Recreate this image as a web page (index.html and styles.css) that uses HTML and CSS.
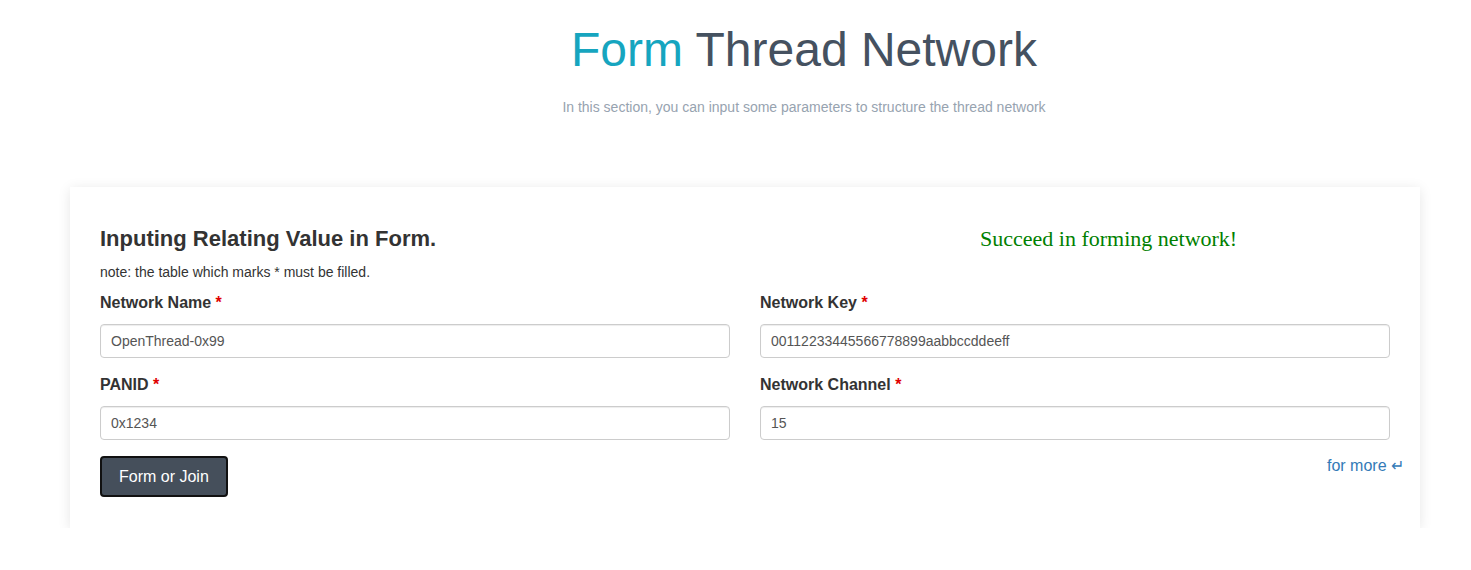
FILE: index.html
```html
<!DOCTYPE html>
<html>
<head>
<meta charset="utf-8">
<link rel="stylesheet" href="styles.css">
</head>
<body>
<header class="hero">
  <h1 class="title"><span class="accent">Form</span> Thread Network</h1>
  <p class="subtitle">In this section, you can input some parameters to structure the thread network</p>
</header>
<section class="card">
  <div class="card-head">
    <div class="head-left">
      <h2 class="form-title">Inputing Relating Value in Form.</h2>
      <p class="note">note: the table which marks * must be filled.</p>
    </div>
    <div class="head-right">
      <p class="success">Succeed in forming network!</p>
    </div>
  </div>
  <div class="grid">
    <div class="field">
      <label class="label">Network Name <span class="req">*</span></label>
      <input class="input" type="text" value="OpenThread-0x99">
    </div>
    <div class="field">
      <label class="label">Network Key <span class="req">*</span></label>
      <input class="input" type="text" value="00112233445566778899aabbccddeeff">
    </div>
    <div class="field">
      <label class="label">PANID <span class="req">*</span></label>
      <input class="input" type="text" value="0x1234">
    </div>
    <div class="field">
      <label class="label">Network Channel <span class="req">*</span></label>
      <input class="input" type="text" value="15">
    </div>
  </div>
  <div class="actions">
    <button class="btn" type="button">Form or Join</button>
    <a class="more" href="#">for more ↵</a>
  </div>
</section>
</body>
</html>
```
FILE: styles.css
```css
html, body {
  margin: 0;
  padding: 0;
  background: #ffffff;
  font-family: "Liberation Sans", Arial, sans-serif;
  color: #333333;
}
.hero {
  padding-left: 137px;
  text-align: center;
  padding-top: 22px;
}
.title {
  margin: 0;
  font-size: 48px;
  font-weight: 400;
  line-height: 56px;
  color: #455160;
}
.accent {
  color: #16a5bf;
}
.subtitle {
  margin: 19px 0 0 0;
  font-size: 14px;
  line-height: 20px;
  color: #97a3b0;
}
.card {
  margin: 70px 51px 0 70px;
  background: #fff;
  box-shadow: 0 2px 12px rgba(0,0,0,0.1);
  padding: 39px 30px 31px 30px;
}
.card-head {
  display: grid;
  grid-template-columns: 1fr 1fr;
  column-gap: 30px;
}
.head-right {
  padding-left: 220px;
}
.form-title {
  margin: 0;
  font-size: 22px;
  font-weight: 700;
  line-height: 26px;
  color: #333;
}
.note {
  margin: 10px 0 0 0;
  font-size: 14px;
  line-height: 20px;
  color: #333;
}
.success {
  margin: 0;
  font-family: "Liberation Serif", "Times New Roman", serif;
  font-size: 22px;
  line-height: 26px;
  color: #008000;
}
.grid {
  display: grid;
  grid-template-columns: 1fr 1fr;
  column-gap: 30px;
  row-gap: 16px;
  margin-top: 10px;
}
.field {
  display: flex;
  flex-direction: column;
}
.label {
  font-size: 16px;
  font-weight: 700;
  line-height: 22px;
  margin-bottom: 10px;
  color: #333;
}
.req {
  color: #e00000;
}
.input {
  box-sizing: border-box;
  height: 34px;
  padding: 6px 10px;
  font-family: "Liberation Sans", Arial, sans-serif;
  font-size: 14px;
  color: #555;
  border: 1px solid #cccccc;
  border-radius: 4px;
  background: #fff;
  box-shadow: inset 0 1px 1px rgba(0,0,0,0.075);
  outline: none;
}
.actions {
  display: flex;
  justify-content: space-between;
  align-items: flex-start;
  margin-top: 16px;
  margin-right: -14px;
}
.btn {
  box-sizing: border-box;
  height: 41px;
  padding: 0 17px;
  font-family: "Liberation Sans", Arial, sans-serif;
  font-size: 16px;
  color: #fff;
  background: #454f5b;
  border: 2px solid #111;
  border-radius: 4px;
}
.more {
  margin-top: 0;
  font-size: 16px;
  line-height: 20px;
  color: #337ab7;
  text-decoration: none;
}
```
